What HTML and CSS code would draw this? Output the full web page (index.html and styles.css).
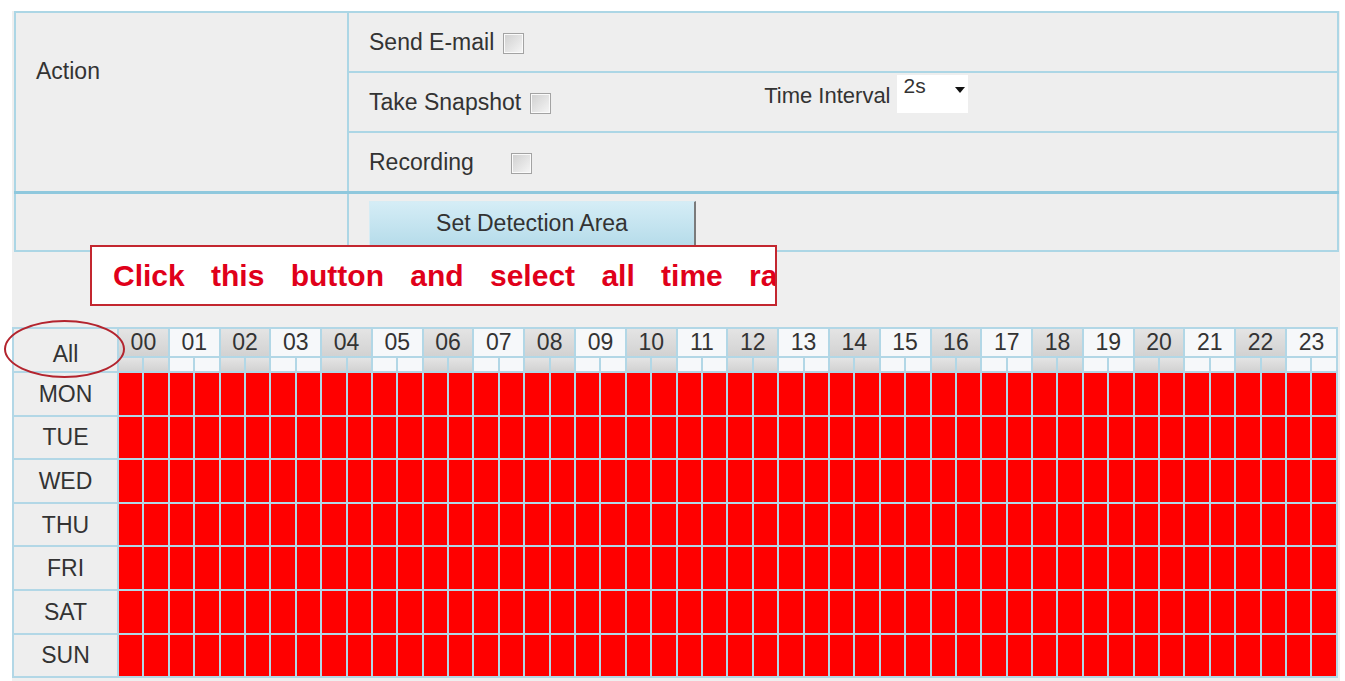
FILE: index.html
```html
<!DOCTYPE html>
<html lang="en">
<head>
  <meta charset="UTF-8" />
  <title>Motion Detection</title>
  <link rel="stylesheet" href="styles.css">
</head>
<body>
  <div class="page">
    <table class="action-table">
      <colgroup><col class="label-col"><col></colgroup>
      <tr>
        <td class="label" rowspan="3">Action</td>
        <td><div class="opt">Send E-mail <input type="checkbox" /></div></td>
      </tr>
      <tr>
        <td>
          <div class="opt">
            Take Snapshot <input type="checkbox" />
            <div class="interval">
              <span class="interval-label">Time Interval</span>
              <span class="select">2s</span>
            </div>
          </div>
        </td>
      </tr>
      <tr>
        <td><div class="opt">Recording <input class="wide" type="checkbox" /></div></td>
      </tr>
      <tr class="area-row">
        <td></td>
        <td class="btn-cell"><button class="area-btn">Set Detection Area</button></td>
      </tr>
    </table>

    <div class="note">Click this button and select all time range</div>

    <table class="schedule" id="schedule"></table>
    <div class="ring"></div>
  </div>

  <script>
    const days = ['MON', 'TUE', 'WED', 'THU', 'FRI', 'SAT', 'SUN'];

    function buildSchedule() {
      let html = '<colgroup><col class="day-col"><col span="48"></colgroup>';

      html += '<tr class="hours"><th class="corner" rowspan="2">All</th>';
      for (let h = 0; h < 24; h++) {
        html += `<th class="hour ${h % 2 ? 'odd' : 'even'}" colspan="2">${String(h).padStart(2, '0')}</th>`;
      }
      html += '</tr><tr class="ticks">';
      for (let i = 0; i < 48; i++) {
        html += `<td class="${Math.floor(i / 2) % 2 ? 'odd' : 'even'}"></td>`;
      }
      html += '</tr>';

      days.forEach(day => {
        html += `<tr class="day-row"><th class="day">${day}</th>`;
        for (let i = 0; i < 48; i++) html += '<td class="slot"></td>';
        html += '</tr>';
      });

      document.getElementById('schedule').innerHTML = html;
    }

    buildSchedule();
  </script>
</body>
</html>
```

FILE: styles.css
```css
body {
  margin: 0;
  background: #fff;
  font-family: "Liberation Sans", Arial, sans-serif;
  font-size: 23px;
  color: #333;
}
.page {
  position: relative;
  margin: 11px 5px 0 12px;
  height: 670px;
  background: #efefef;
}

/* action options */
.action-table {
  margin-left: 2px;
  width: 1325px;
  border-collapse: collapse;
  table-layout: fixed;
}
.action-table .label-col {
  width: 333px;
}
.action-table td {
  border: 2px solid #acd6e5;
  background: #eeeeee;
  padding: 0 0 0 20px;
}
.action-table .label {
  vertical-align: top;
  padding-top: 45px;
  line-height: 26px;
}
.opt {
  display: flex;
  align-items: center;
  height: 58px;
  line-height: 26px;
}
.opt input[type=checkbox] {
  appearance: none;
  width: 21px;
  height: 21px;
  margin: 2px 0 0 9px;
  border: 1px solid #a3a3a3;
  background: linear-gradient(135deg, #cfcfcf, #f6f6f6);
  box-shadow: inset 0 0 0 1px #fafafa;
}
.opt input.wide {
  margin-left: 37px;
}
.interval {
  display: flex;
  align-items: flex-end;
  align-self: flex-start;
  margin: 2px 0 0 213px;
}
.interval-label {
  font-size: 22px;
  line-height: 26px;
  margin-bottom: 4px;
}
.select {
  display: flex;
  justify-content: space-between;
  box-sizing: border-box;
  width: 71px;
  height: 38px;
  padding: 0 3px 0 7px;
  margin-left: 6px;
  background: #fff;
  font-size: 21px;
  line-height: 22px;
}
.select::after {
  content: "";
  margin-top: 12px;
  border-left: 5px solid transparent;
  border-right: 5px solid transparent;
  border-top: 6px solid #111;
}
.area-row td {
  border-top: 3px solid #8fc8dd;
  height: 56px;
}
.btn-cell {
  vertical-align: top;
}
.area-btn {
  display: block;
  margin-top: 7px;
  width: 327px;
  height: 46px;
  font: inherit;
  color: #333;
  background: linear-gradient(#d5edf6, #b6dcea);
  border: 1px solid #d6ecf4;
  border-right: 2px solid #7b7b7b;
  border-bottom: 2px solid #7b7b7b;
  padding: 0;
}

/* callout over the form */
.note {
  position: absolute;
  left: 78px;
  top: 234px;
  box-sizing: border-box;
  width: 687px;
  height: 61px;
  padding-left: 21px;
  border: 2px solid #c3262f;
  background: #fff;
  color: #e0001a;
  font-size: 30px;
  font-weight: bold;
  line-height: 57px;
  word-spacing: 18px;
  white-space: nowrap;
  overflow: hidden;
}

/* weekly schedule grid */
.schedule {
  margin-top: 75px;
  width: 1326px;
  border-collapse: collapse;
  table-layout: fixed;
}
.schedule .day-col {
  width: 105px;
}
.schedule th,
.schedule td {
  padding: 0;
  border: 2px solid #b2d7e6;
  font-weight: normal;
  line-height: 26px;
}
.schedule .corner,
.schedule .day {
  background: #eeeeee;
  text-align: center;
}
.schedule .corner {
  padding-top: 8px;
}
.hours th {
  height: 27px;
}
.hours .hour {
  vertical-align: top;
  text-align: center;
}
.ticks td {
  height: 13px;
}
.hours .even,
.ticks .even {
  background: linear-gradient(#e4e4e4, #d2d2d2);
}
.hours .odd,
.ticks .odd {
  background: #f6f8fa;
}
.day-row {
  height: 43.6px;
}
.slot {
  background: #ff0000;
  border-color: #d9c3cb #f1c6ca;
}
.slot:last-child {
  border-right-color: #b2d7e6;
}
.day-row:last-child .slot {
  border-bottom-color: #b2d7e6;
}
.ring {
  position: absolute;
  left: -8px;
  top: 309px;
  width: 117px;
  height: 54px;
  border: 2.5px solid #b3242e;
  border-radius: 50%;
}
```
